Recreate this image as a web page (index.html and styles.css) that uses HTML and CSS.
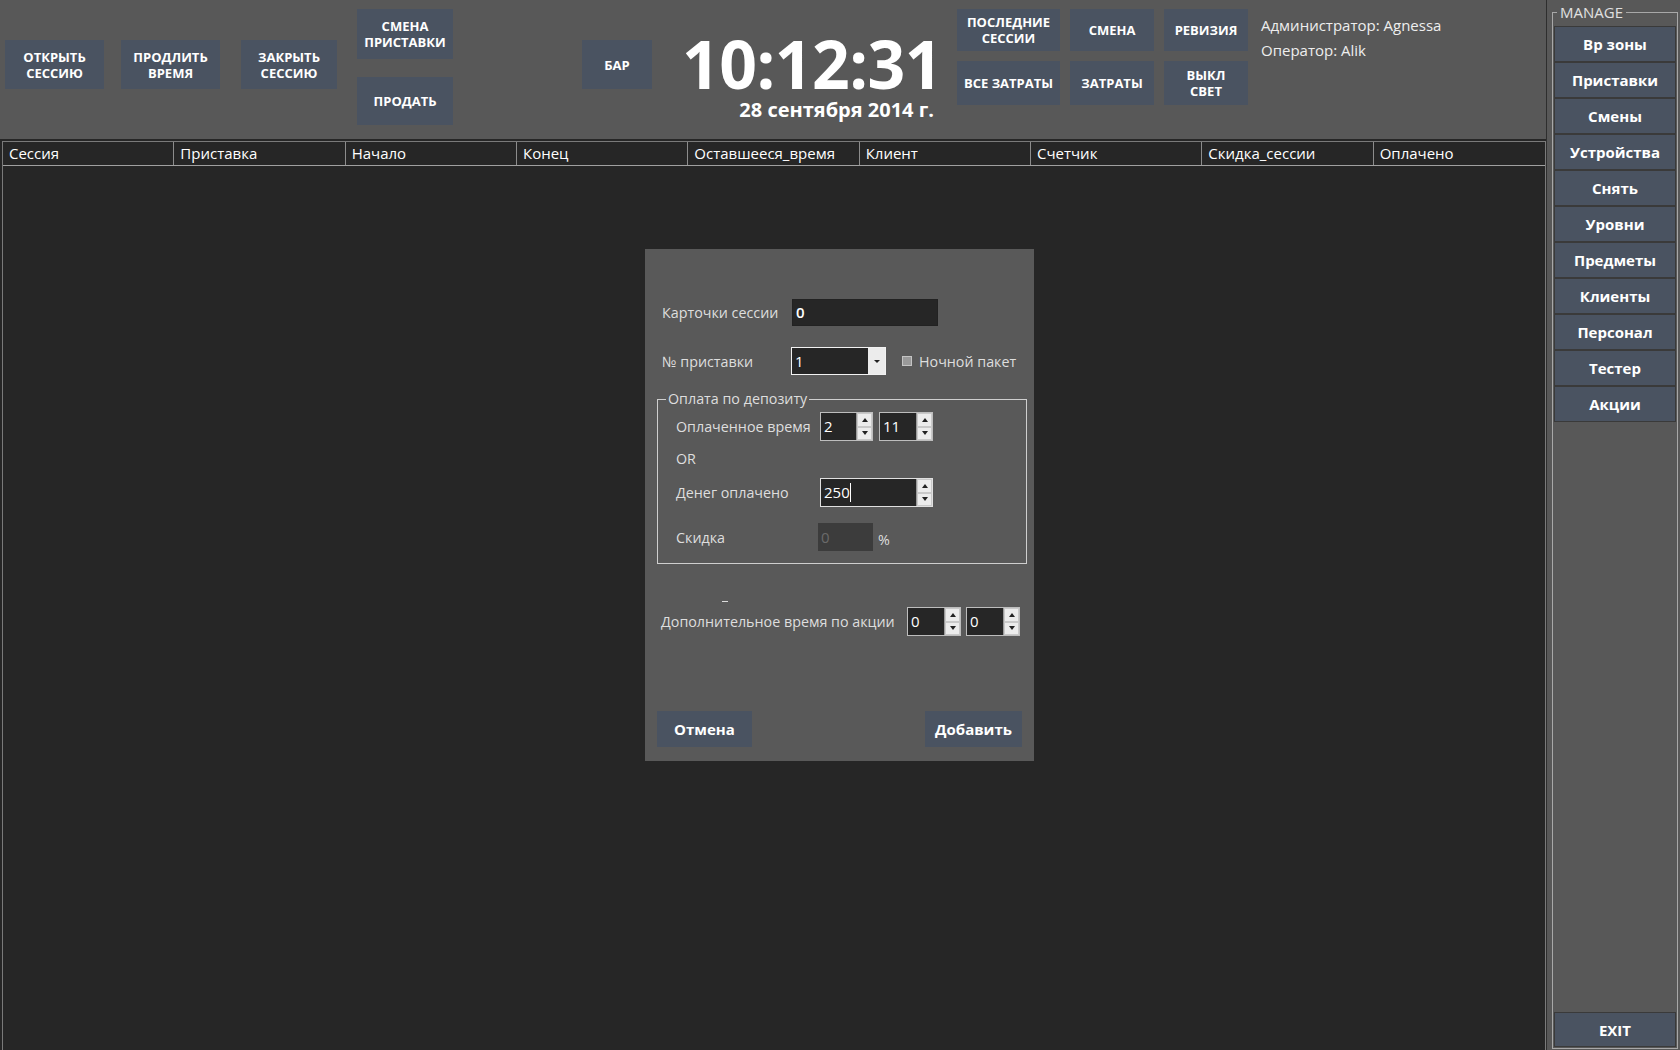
FILE: index.html
```html
<!DOCTYPE html>
<html lang="ru">
<head>
<meta charset="utf-8">
<title>Sessions</title>
<link rel="stylesheet" href="styles.css">
</head>
<body>
<div class="app">
  <div class="main">
    <div class="topbar">
      <div class="tbtn b-open">ОТКРЫТЬ<br>СЕССИЮ</div>
      <div class="tbtn b-ext">ПРОДЛИТЬ<br>ВРЕМЯ</div>
      <div class="tbtn b-close">ЗАКРЫТЬ<br>СЕССИЮ</div>
      <div class="stack">
        <div class="tbtn b-swap">СМЕНА<br>ПРИСТАВКИ</div>
        <div class="tbtn b-sell">ПРОДАТЬ</div>
      </div>
      <div class="tbtn b-bar">БАР</div>
      <div class="clock">
        <div class="time">10:12:31</div>
        <div class="date">28 сентября 2014 г.</div>
      </div>
      <div class="btn-grid">
        <div class="tbtn">ПОСЛЕДНИЕ<br>СЕССИИ</div>
        <div class="tbtn">СМЕНА</div>
        <div class="tbtn">РЕВИЗИЯ</div>
        <div class="tbtn">ВСЕ ЗАТРАТЫ</div>
        <div class="tbtn">ЗАТРАТЫ</div>
        <div class="tbtn">ВЫКЛ<br>СВЕТ</div>
      </div>
      <div class="users">
        <div>Администратор: Agnessa</div>
        <div>Оператор: Alik</div>
      </div>
    </div>
    <div class="table">
      <div class="thead">
        <div class="th">Сессия</div>
        <div class="th">Приставка</div>
        <div class="th">Начало</div>
        <div class="th">Конец</div>
        <div class="th">Оставшееся_время</div>
        <div class="th">Клиент</div>
        <div class="th">Счетчик</div>
        <div class="th">Скидка_сессии</div>
        <div class="th">Оплачено</div>
      </div>
    </div>
  </div>
  <div class="side">
    <fieldset class="manage">
      <legend>MANAGE</legend>
      <div class="sbtn first">Вр зоны</div>
      <div class="sbtn">Приставки</div>
      <div class="sbtn">Смены</div>
      <div class="sbtn">Устройства</div>
      <div class="sbtn">Снять</div>
      <div class="sbtn">Уровни</div>
      <div class="sbtn">Предметы</div>
      <div class="sbtn">Клиенты</div>
      <div class="sbtn">Персонал</div>
      <div class="sbtn">Тестер</div>
      <div class="sbtn">Акции</div>
      <div class="sbtn exit">EXIT</div>
    </fieldset>
  </div>
</div>

<div class="dialog">
  <div class="row r-cards">
    <span class="lbl l-cards">Карточки сессии</span>
    <div class="input i-cards">0</div>
  </div>
  <div class="row r-console">
    <span class="lbl l-console">№ приставки</span>
    <div class="combo">
      <span class="val">1</span>
      <span class="drop"><i class="tri-down"></i></span>
    </div>
    <span class="check"></span>
    <span class="lbl l-night">Ночной пакет</span>
  </div>
  <fieldset class="deposit">
    <legend>Оплата по депозиту</legend>
    <div class="row r-paid">
      <span class="lbl l-in">Оплаченное время</span>
      <div class="spin w53"><span class="val">2</span><span class="arrows"><i class="up"></i><i class="dn"></i></span></div>
      <div class="spin w54 gap6"><span class="val">11</span><span class="arrows"><i class="up"></i><i class="dn"></i></span></div>
    </div>
    <div class="row r-or"><span class="lbl l-in">OR</span></div>
    <div class="row r-money">
      <span class="lbl l-in">Денег оплачено</span>
      <div class="spin w113 focus"><span class="val">250<i class="caret"></i></span><span class="arrows"><i class="up"></i><i class="dn"></i></span></div>
    </div>
    <div class="row r-disc">
      <span class="lbl l-disc">Скидка</span>
      <div class="input i-disc">0</div>
      <span class="lbl pct">%</span>
    </div>
  </fieldset>
  <div class="dash"></div>
  <div class="row r-extra">
    <span class="lbl l-extra">Дополнительное время по акции</span>
    <div class="spin w54"><span class="val">0</span><span class="arrows"><i class="up"></i><i class="dn"></i></span></div>
    <div class="spin w54 gap5"><span class="val">0</span><span class="arrows"><i class="up"></i><i class="dn"></i></span></div>
  </div>
  <div class="actions">
    <div class="dbtn d-cancel">Отмена</div>
    <div class="dbtn d-add">Добавить</div>
  </div>
</div>
</body>
</html>
```

FILE: styles.css
```css
html, body {
  margin: 0;
  padding: 0;
}
body {
  width: 1680px;
  height: 1050px;
  overflow: hidden;
  background: #262626;
  font-family: "Open Sans", "Noto Sans", sans-serif;
  color: #fff;
  position: relative;
}
.app {
  display: flex;
  height: 1050px;
}
.main {
  width: 1546px;
  display: flex;
  flex-direction: column;
}

/* ---------- top bar ---------- */
.topbar {
  display: flex;
  align-items: flex-start;
  height: 139px;
  flex: 0 0 139px;
  box-sizing: border-box;
  padding-left: 5px;
  background: #585858;
}
.tbtn {
  display: flex;
  align-items: center;
  justify-content: center;
  text-align: center;
  background: #4a5361;
  color: #fff;
  font-weight: 700;
  font-size: 13px;
  line-height: 16px;
}
.b-open { width: 99px; height: 49px; margin-top: 40px; }
.b-ext { width: 99px; height: 49px; margin: 40px 0 0 17px; }
.b-close { width: 96px; height: 49px; margin: 40px 0 0 21px; }
.stack {
  display: flex;
  flex-direction: column;
  width: 96px;
  margin-left: 20px;
}
.b-swap { height: 50px; margin-top: 9px; }
.b-sell { height: 48px; margin-top: 18px; }
.b-bar { width: 70px; height: 49px; margin: 40px 0 0 129px; }
.clock {
  width: 252px;
  margin-left: 30px;
  text-align: right;
}
.time {
  margin-top: 30px;
  font-size: 66px;
  font-weight: 700;
  line-height: 66px;
  letter-spacing: -0.5px;
}
.date {
  margin-top: 4px;
  font-size: 20px;
  font-weight: 700;
  line-height: 20px;
}
.btn-grid {
  display: grid;
  grid-template-columns: 103px 84px 84px;
  grid-template-rows: 42px 44px;
  column-gap: 10px;
  row-gap: 10px;
  margin: 9px 0 0 23px;
}
.users {
  margin: 13px 0 0 13px;
  font-size: 15px;
  line-height: 25px;
  color: #eee;
}

/* ---------- table ---------- */
.table {
  flex: 1;
  margin: 2px 0 0 2px;
  border: 1px solid #7a7a7a;
  border-bottom: none;
  background: #262626;
}
.thead {
  display: grid;
  grid-template-columns: repeat(9, 1fr);
  height: 23px;
  border-bottom: 1px solid #a0a0a0;
}
.th {
  border-right: 1px solid #8c8c8c;
  padding-left: 6px;
  font-size: 15px;
  line-height: 23px;
  color: #fff;
  white-space: nowrap;
  overflow: hidden;
}
.th:last-child { border-right: none; }

/* ---------- side panel ---------- */
.side {
  width: 134px;
  box-sizing: border-box;
  padding: 2px 2px 1px 5px;
  background: #585858;
  border-left: 1px solid #2e2e2e;
  display: flex;
}
.manage {
  flex: 1;
  margin: 0;
  padding: 0 1px;
  min-width: 0;
  border: 1px solid #a8a8a8;
  display: flex;
  flex-direction: column;
}
.manage legend {
  font-size: 15px;
  line-height: 20px;
  color: #e0e0e0;
  padding: 0 3px;
  margin-left: 3px;
}
.sbtn {
  height: 36px;
  box-sizing: border-box;
  border: 1px solid #3a3a3a;
  background: #4a5361;
  display: flex;
  align-items: center;
  justify-content: center;
  font-size: 15px;
  font-weight: 700;
  color: #fff;
}
.sbtn.first { margin-top: 4px; }
.sbtn.exit {
  margin-top: auto;
  height: 35px;
  margin-bottom: 1px;
}

/* ---------- dialog ---------- */
.dialog {
  position: absolute;
  left: 645px;
  top: 249px;
  width: 389px;
  height: 512px;
  box-sizing: border-box;
  padding: 50px 0 0 12px;
  background: #595959;
}
.row {
  display: flex;
  align-items: center;
}
.lbl {
  font-size: 14.3px;
  color: #dedede;
  white-space: nowrap;
}
.r-cards { height: 27px; }
.l-cards { width: 135px; padding-left: 5px; box-sizing: border-box; }
.input {
  box-sizing: border-box;
  background: #262626;
  font-size: 15px;
  line-height: 25px;
  padding-left: 3px;
}
.i-cards {
  width: 146px;
  height: 27px;
  border: 1px solid #222;
  font-weight: 600;
}
.r-console { height: 28px; margin-top: 21px; }
.l-console { width: 134px; padding-left: 5px; box-sizing: border-box; }
.combo {
  width: 95px;
  height: 28px;
  box-sizing: border-box;
  border: 1px solid #f2f2f2;
  background: #262626;
  display: flex;
}
.combo .val {
  flex: 1;
  font-size: 15px;
  line-height: 26px;
  padding-left: 3px;
}
.drop {
  width: 17px;
  background: #ececec;
  display: flex;
  align-items: center;
  justify-content: center;
}
.tri-down {
  width: 0;
  height: 0;
  border-left: 3px solid transparent;
  border-right: 3px solid transparent;
  border-top: 3px solid #222;
}
.check {
  width: 10px;
  height: 10px;
  box-sizing: border-box;
  margin-left: 16px;
  background: #9a9a9a;
  border: 1px solid #c4c4c4;
}
.l-night { margin-left: 7px; }

.deposit {
  width: 370px;
  box-sizing: border-box;
  margin: 14px 0 0 0;
  padding: 0 0 12px 0;
  border: 1px solid #cfcfcf;
  min-width: 0;
}
.deposit legend {
  font-size: 14.3px;
  line-height: 20px;
  color: #dedede;
  padding: 0 2px;
  margin-left: 8px;
}
.r-paid { height: 29px; margin-top: 3px; }
.l-in { width: 162px; padding-left: 18px; box-sizing: border-box; }
.r-or { height: 20px; margin-top: 7px; }
.r-money { height: 29px; margin-top: 10px; }
.r-disc { height: 28px; margin-top: 16px; }
.l-disc { width: 160px; padding-left: 18px; box-sizing: border-box; }
.i-disc {
  width: 55px;
  height: 28px;
  background: #3c3c3c;
  color: #6a6a6a;
  line-height: 28px;
}
.pct { margin-left: 5px; margin-top: 4px; }

.spin {
  height: 29px;
  box-sizing: border-box;
  border: 1px solid #bdbdbd;
  background: #262626;
  display: flex;
}
.spin.focus { border-color: #e0e0e0; }
.spin .val {
  flex: 1;
  font-size: 15px;
  line-height: 27px;
  padding-left: 3px;
}
.caret {
  display: inline-block;
  width: 1px;
  height: 19px;
  background: #fff;
  vertical-align: -4px;
}
.w53 { width: 53px; }
.w54 { width: 54px; }
.w113 { width: 113px; }
.gap6 { margin-left: 6px; }
.gap5 { margin-left: 5px; }
.arrows {
  width: 15px;
  display: flex;
  flex-direction: column;
  background: #e6e6e6;
  border-left: 1px solid #9a9a9a;
}
.arrows i {
  flex: 1;
  display: flex;
  align-items: center;
  justify-content: center;
  border: 1px solid #c9c9c9;
  background: #ececec;
}
.arrows .up::after,
.arrows .dn::after {
  content: "";
  width: 0;
  height: 0;
  border-left: 3px solid transparent;
  border-right: 3px solid transparent;
}
.arrows .up::after { border-bottom: 4px solid #222; }
.arrows .dn::after { border-top: 4px solid #222; }

.dash {
  width: 6px;
  height: 1px;
  background: #dcdcdc;
  margin: 37px 0 0 65px;
}
.r-extra { height: 29px; margin-top: 5px; }
.l-extra { width: 250px; padding-left: 4px; box-sizing: border-box; }

.actions {
  display: flex;
  justify-content: space-between;
  padding-right: 12px;
  margin-top: 75px;
}
.dbtn {
  height: 36px;
  display: flex;
  align-items: center;
  justify-content: center;
  background: #4a5361;
  font-size: 15px;
  font-weight: 700;
  color: #fff;
}
.d-cancel { width: 95px; }
.d-add { width: 97px; }
```
